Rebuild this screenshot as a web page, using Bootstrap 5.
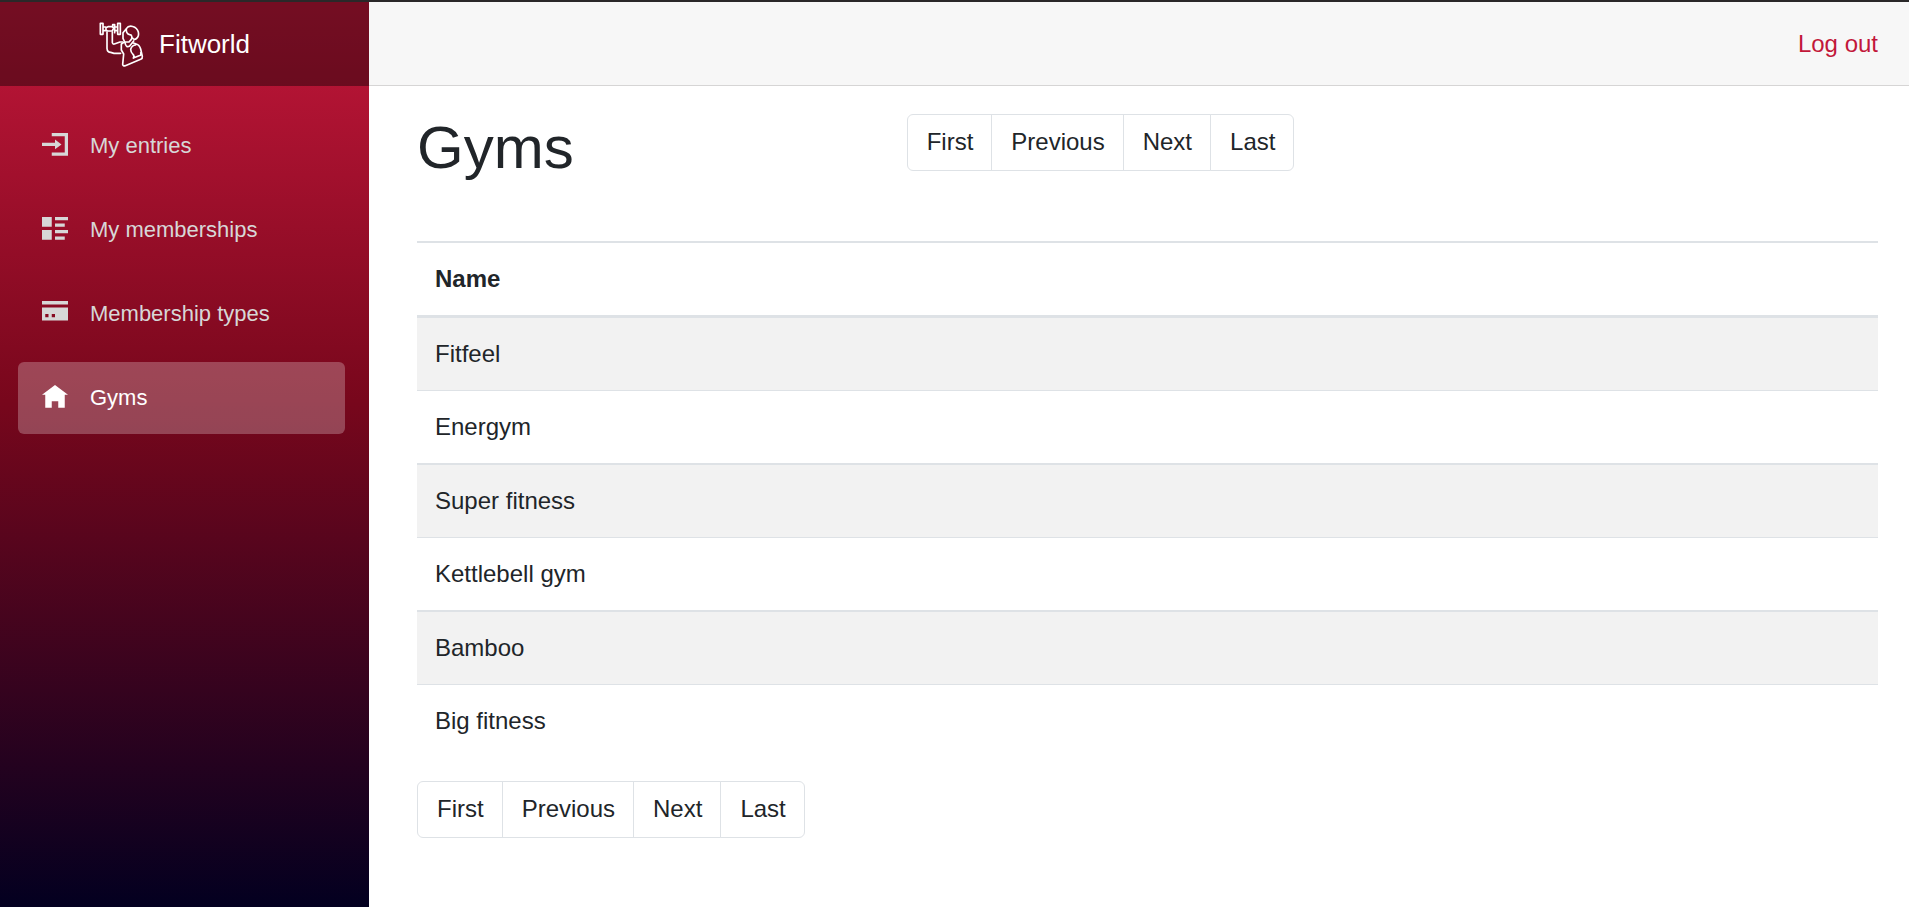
<!DOCTYPE html>
<html lang="en">
<head>
<meta charset="utf-8">
<meta name="viewport" content="width=device-width, initial-scale=1">
<title>Fitworld - Gyms</title>
<link href="https://cdn.jsdelivr.net/npm/bootstrap@5.3.0/dist/css/bootstrap.min.css" rel="stylesheet">
<style>
  body { font-family: "Liberation Sans", Arial, sans-serif; font-size: 24px; line-height: 36px; color: #212529; border-top: 2px solid #2a2829; }
  .app-shell { min-height: calc(100vh - 2px); }
  .app-sidebar { flex: 0 0 369px; background: linear-gradient(180deg, #c2173a 0%, #78071c 44%, #030020 100%); }
  .top-row { height: 84px; }
  .app-sidebar .top-row { background: rgba(0, 0, 0, .4); padding-left: 94px; }
  .brand-link { font-size: 26px; color: #fff; gap: 9px; }
  .app-header { background: #f7f7f7; border-bottom: 1px solid #d6d5d5; padding-right: 31px; }
  .app-header a { color: #c2173a; }
  .side-menu { padding: 24px 24px 0 18px; gap: 12px; }
  .side-menu .nav-link { height: 72px; padding: 0 24px; gap: 22px; font-size: 22px; color: #d7d7d7; border-radius: 6px; }
  .side-menu .nav-link:hover, .side-menu .nav-link.active { color: #fff; }
  .side-menu .nav-link.active { background: rgba(255, 255, 255, .25); }
  .content-area { padding: 28px 31px 24px 48px; }
  .title-grid { display: grid; grid-template-columns: 1fr 2fr; gap: 4px; align-items: start; margin-bottom: 59px; }
  h1 { font-size: 60px; line-height: 68px; }
  .page-link, .page-link:hover { padding: 9px 18px 10px 19px; font-size: 24px; line-height: 36px; color: #212529; border-color: #dee2e6; background: #fff; }
  .pagination { --bs-pagination-border-radius: 6px; }
  .gym-table { border-collapse: separate; border-spacing: 0; margin-bottom: 24px; border-top: 2px solid #dee2e6; }
  .gym-table > :not(caption) > * > * { padding: 18px; border-bottom: 0 solid #dee2e6; }
  .gym-table > thead > tr > th { border-bottom-width: 3px; }
  .gym-table > tbody > tr > td { border-bottom-width: 2px; }
  .gym-table > tbody > tr:nth-child(odd) > td { background: #f2f2f2; border-bottom-width: 1px; box-shadow: none; }
  .gym-table > tbody > tr:last-child > td { border-bottom-width: 0; }
</style>
</head>
<body>
<div class="app-shell d-flex">
  <aside class="app-sidebar">
    <div class="top-row d-flex align-items-center">
      <a class="brand-link d-flex align-items-center text-decoration-none" href="#">
        <svg width="56" height="56" viewBox="0 0 168 168" fill="none" stroke="#fff" stroke-width="5" stroke-linejoin="round" stroke-linecap="round" aria-hidden="true">
          <path d="M19 22h8v33h-8zM71 22h8v33h-8zM27 33h8M62 33h9M27 44h8M62 44h9M36 35l6-3h12l5 3-4 10H40l-4-3zM56 31v-5h6v24"/>
          <path d="M39 48v49q1 12 11 12l10 3h20M55 48v32q1 5 6 4l17-6h8"/>
          <path d="M97 38C105 25 128 30 133 48C137 66 120 76 116 66M97 38l-10 12v17l5 11h13l7-8M97 38c-1 12 4 17 10 18 7 0 8 8 5 14"/>
          <path d="M82 84v18l7 12-3 31q1 6 8 4l46-19q6-3 5-9l-5-22q-4-13-13-15l-11-4M82 84l8-5M93 80q3 17 14 10l12-15M110 100q4-13 15-13M118 126l21-8q3-2 1-8M118 126q4-6-1-11-7-6-7-15"/>
        </svg>
        <span>Fitworld</span>
      </a>
    </div>
    <nav class="side-menu nav flex-column" aria-label="Main">
      <a class="nav-link d-flex align-items-center" href="#">
        <svg width="26" height="26" viewBox="0 0 8 8" fill="currentColor" aria-hidden="true"><path d="M3 0v1h4v5h-4v1h5v-7h-5zm1 2v1h-4v1h4v1l2-1.5-2-1.5z"/></svg>My entries</a>
      <a class="nav-link d-flex align-items-center" href="#">
        <svg width="26" height="26" viewBox="0 0 8 8" fill="currentColor" aria-hidden="true"><path d="M0 0v3h3v-3h-3zm4 0v1h4v-1h-4zm0 2v1h3v-1h-3zm-4 2v3h3v-3h-3zm4 0v1h4v-1h-4zm0 2v1h3v-1h-3z"/></svg>My memberships</a>
      <a class="nav-link d-flex align-items-center" href="#">
        <svg width="26" height="26" viewBox="0 0 8 8" fill="currentColor" fill-rule="evenodd" aria-hidden="true"><path d="M0 0v1.1h8v-1.1zM0 2v4h8v-4zM1 4h1v1h-1zM3 4h1v1h-1z"/></svg>Membership types</a>
      <a class="nav-link active d-flex align-items-center" href="#" aria-current="page">
        <svg width="26" height="26" viewBox="0 0 8 8" fill="currentColor" aria-hidden="true"><path d="M4 0l-4 3h1v4h2v-2h2v2h2v-4.03l1 .03-4-3z"/></svg>Gyms</a>
    </nav>
  </aside>
  <div class="flex-grow-1">
    <header class="app-header top-row d-flex align-items-center justify-content-end">
      <a class="text-decoration-none" href="#">Log out</a>
    </header>
    <main class="content-area">
      <div class="title-grid">
        <h1 class="m-0 fw-normal">Gyms</h1>
        <ul class="pagination m-0">
          <li class="page-item"><a class="page-link" href="#">First</a></li>
          <li class="page-item"><a class="page-link" href="#">Previous</a></li>
          <li class="page-item"><a class="page-link" href="#">Next</a></li>
          <li class="page-item"><a class="page-link" href="#">Last</a></li>
        </ul>
      </div>
      <table class="table gym-table">
        <thead><tr><th scope="col">Name</th></tr></thead>
        <tbody>
          <tr><td>Fitfeel</td></tr>
          <tr><td>Energym</td></tr>
          <tr><td>Super fitness</td></tr>
          <tr><td>Kettlebell gym</td></tr>
          <tr><td>Bamboo</td></tr>
          <tr><td>Big fitness</td></tr>
        </tbody>
      </table>
      <ul class="pagination m-0">
        <li class="page-item"><a class="page-link" href="#">First</a></li>
        <li class="page-item"><a class="page-link" href="#">Previous</a></li>
        <li class="page-item"><a class="page-link" href="#">Next</a></li>
        <li class="page-item"><a class="page-link" href="#">Last</a></li>
      </ul>
    </main>
  </div>
</div>
<script src="https://cdn.jsdelivr.net/npm/bootstrap@5.3.0/dist/js/bootstrap.bundle.min.js"></script>
</body>
</html>
